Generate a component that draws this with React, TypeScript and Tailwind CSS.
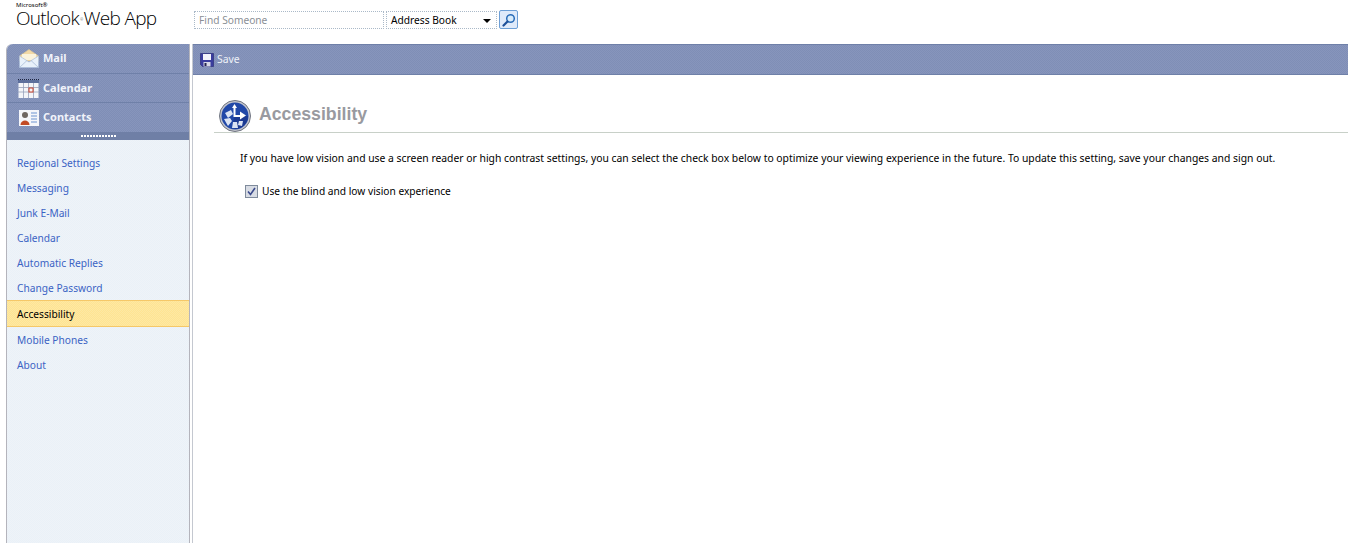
import React from "react";

const font = "font-['Noto_Sans','Liberation_Sans',sans-serif]";

// the reference is a dithered gif, so the panels get a faint checker
const barBg = "bg-[repeating-conic-gradient(#8795bc_0_25%,#7f8eb6_0_50%)] bg-[length:2px_2px]";
const sideBg = "bg-[repeating-conic-gradient(#e9f1f8_0_25%,#eff3f8_0_50%)] bg-[length:2px_2px]";
const activeBg = "bg-[repeating-conic-gradient(#ffe492_0_25%,#fde8a4_0_50%)] bg-[length:2px_2px]";

const optionLinks = ["Regional Settings", "Messaging", "Junk E-Mail", "Calendar", "Automatic Replies", "Change Password"];

function MailIcon() {
  return (
    <svg width="20" height="19" viewBox="0 0 20 19">
      <path d="M0.5 7 L10 0.5 L19.5 7 L19.5 12 L0.5 12 Z" fill="#f2d9a6" stroke="#d8c49a" strokeWidth="0.7" />
      <path d="M3 5 H17 V11 H3 Z" fill="#fbf3dc" />
      <path d="M0.5 7 L10 13 L19.5 7 L19.5 18.5 L0.5 18.5 Z" fill="#e8f1fb" stroke="#a9bcd8" strokeWidth="0.7" />
      <path d="M0.5 18.5 L8 11.5 M19.5 18.5 L12 11.5" stroke="#a9bcd8" strokeWidth="0.8" fill="none" />
    </svg>
  );
}

function CalendarIcon() {
  return (
    <svg width="21" height="19" viewBox="0 0 21 19">
      <rect x="0.5" y="1" width="20" height="18" fill="#f4f5f9" />
      <path d="M0 0.5 H21" stroke="#1b2340" strokeDasharray="1 1" />
      <rect x="0" y="1" width="21" height="3" fill="#5d6f9c" />
      <path d="M5.5 4 V19 M10.5 4 V19 M15.5 4 V19 M0 8.5 H21 M0 13 H21" stroke="#98a2bb" strokeWidth="0.8" />
      <rect x="11" y="9" width="4" height="4" fill="#f4f5f9" stroke="#c8402a" strokeWidth="1" />
    </svg>
  );
}

function ContactsIcon() {
  return (
    <svg width="20" height="16" viewBox="0 0 20 16">
      <rect x="0" y="0" width="20" height="16" fill="#f5f6fa" />
      <circle cx="6" cy="5" r="3" fill="#6e6660" />
      <path d="M1.5 15 C1.5 9 10.5 9 10.5 15 Z" fill="#c24a25" />
      <path d="M12 3 H18 M12 6 H18 M12 9 H18 M12 12 H18" stroke="#6f93cf" strokeWidth="1.2" />
    </svg>
  );
}

function SaveIcon() {
  return (
    <svg width="14" height="14" viewBox="0 0 14 14">
      <path d="M0.5 0.5 H13.5 V13.5 H2.5 L0.5 11.5 Z" fill="#3a3d9e" stroke="#25276f" strokeWidth="0.6" />
      <rect x="3" y="1" width="8" height="6" fill="#f2f3fb" />
      <rect x="3.5" y="9" width="7" height="4.5" fill="#d6d8e6" />
      <rect x="4.5" y="10" width="2" height="3" fill="#23244f" />
    </svg>
  );
}

function AccessIcon() {
  return (
    <svg width="32" height="32" viewBox="0 0 32 32">
      <circle cx="16" cy="16" r="15.5" fill="#c4c6ce" stroke="#6f7480" />
      <circle cx="16" cy="16" r="13.5" fill="#2148a8" />
      <path d="M16 16 A13 13 0 0 0 16 29 A13 13 0 0 0 29 16 Z" fill="#1c3a92" />
      <path d="M6 13 L12 10 L14 14 L9 18 Z M5 19 L11 18 L13 21 L9 26 Z M14 22 L18 22 L19 28 L13 28 Z M20 21 L24 21 L23 26 L19 25 Z" fill="#dbe3f3" />
      <path d="M15.5 7 V16 H22" stroke="#fff" strokeWidth="2" fill="none" />
      <path d="M21 11.5 L27 15.5 L21 19.5 Z" fill="#fff" />
      <path d="M13 8 L15.5 4 L18 8 Z" fill="#fff" />
    </svg>
  );
}

function SearchIcon() {
  return (
    <svg width="14" height="14" viewBox="0 0 14 14">
      <circle cx="8.5" cy="5.5" r="3.8" fill="#d9ecfb" stroke="#2a6cb8" strokeWidth="1.5" />
      <path d="M5.5 8.5 L1.5 12.5" stroke="#1d4f99" strokeWidth="2.2" strokeLinecap="round" />
    </svg>
  );
}

function NavRow({ icon, label, className }: { icon: React.ReactNode; label: string; className: string }) {
  return (
    <div className={`flex items-center border-b border-[#6f80a8] ${className}`}>
      <div className="flex w-[36px] shrink-0 justify-end pr-[4px]">{icon}</div>
      <span className="text-[11px] font-bold text-[#f0f3fa]">{label}</span>
    </div>
  );
}

export default function App() {
  return (
    <div className={`flex h-[543px] w-[1348px] flex-col overflow-hidden bg-white ${font}`}>
      <header className="flex h-[44px] shrink-0 items-start">
        <div className="ml-[16px] w-[178px] shrink-0 text-black">
          <div className="mt-[2px] h-[6px] text-[6px] leading-[6px]">Microsoft®</div>
          <div className="mt-[1px] h-[18px] whitespace-nowrap font-['Open_Sans',sans-serif] text-[19px] font-light leading-[18px] tracking-[-0.7px]">
            Outlook<span className="mx-[1px] text-[4px] align-middle">®</span>Web App
          </div>
        </div>
        <div className="mt-[10px] flex items-center">
          <div className="flex h-[18px] w-[190px] items-center border border-dotted border-[#aab9c8] pl-[4px] pt-[2px] text-[10.2px] text-[#8a8f96]">
            Find Someone
          </div>
          <div className="ml-[2px] flex h-[18px] w-[111px] items-center justify-between border border-dotted border-[#aab9c8] pl-[4px] pr-[4px] pt-[2px] text-[10.2px] text-black">
            Address Book
            <span className="mr-[1px] h-0 w-0 border-x-[4px] border-t-[4px] border-x-transparent border-t-black" />
          </div>
          <div className="ml-[2px] flex h-[19px] w-[19px] items-center justify-center rounded-[2px] border border-[#6d9fd6] bg-[#dfeafa]">
            <SearchIcon />
          </div>
        </div>
      </header>

      <div className="flex min-h-0 flex-1">
        <aside className={`ml-[6px] flex w-[184px] shrink-0 flex-col rounded-tl-[6px] border-x border-[#b4b4bc] ${sideBg}`}>
          <div className={`rounded-tl-[6px] ${barBg}`}>
            <NavRow icon={<MailIcon />} label="Mail" className="h-[30px]" />
            <NavRow icon={<CalendarIcon />} label="Calendar" className="h-[29px]" />
            <NavRow icon={<ContactsIcon />} label="Contacts" className="h-[29px] border-b-0" />
            <div className="flex h-[8px] items-center justify-center bg-[#6f7fa6]">
              <div className="h-[2px] w-[35px] bg-[repeating-linear-gradient(90deg,#ffffff_0,#ffffff_2px,transparent_2px,transparent_3px)]" />
            </div>
          </div>
          <nav className="flex flex-col pt-[10px] text-[10.2px] text-[#3b63c4]">
            {optionLinks.map((label) => (
              <div key={label} className="flex h-[25px] items-center pl-[10px] pt-[2px]">
                {label}
              </div>
            ))}
            <div className={`flex h-[27px] items-center border-y border-[#f5c868] pl-[10px] pt-[2px] text-black ${activeBg}`}>
              Accessibility
            </div>
            <div className="flex h-[25px] items-center pl-[10px] pt-[2px]">Mobile Phones</div>
            <div className="flex h-[25px] items-center pl-[10px] pt-[2px]">About</div>
          </nav>
        </aside>

        <main className="ml-[2px] flex min-w-0 flex-1 flex-col border-l border-[#c4c8d0]">
          <div className={`flex h-[31px] shrink-0 items-center gap-[3px] border-y border-[#6f80a8] pl-[7px] text-[10.4px] text-[#eef1f8] ${barBg}`}>
            <SaveIcon />
            Save
          </div>
          <div className="mt-[24px] ml-[21px] flex h-[34px] items-center gap-[8px] border-b border-[#c8d0c8]">
            <div className="ml-[5px]">
              <AccessIcon />
            </div>
            <h1 className="pb-[2px] font-['Liberation_Sans',sans-serif] text-[17.7px] font-bold text-[#999aa0]">Accessibility</h1>
          </div>
          <p className="mt-[18px] ml-[47px] whitespace-nowrap text-[10.37px] leading-[15px] text-black">
            If you have low vision and use a screen reader or high contrast settings, you can select the check box below to optimize your viewing experience in the future. To update this setting, save your changes and sign out.
          </p>
          <label className="mt-[18px] ml-[52px] flex items-center gap-[4px] text-[10.2px] leading-[15px] text-black">
            <span className="flex h-[13px] w-[13px] items-center justify-center border border-[#7f8b9c] bg-[#d8dce4]">
              <svg width="9" height="9" viewBox="0 0 9 9">
                <path d="M1 4.5 L3.5 7.5 L8 1" stroke="#3a4a8c" strokeWidth="1.6" fill="none" />
              </svg>
            </span>
            Use the blind and low vision experience
          </label>
        </main>
      </div>
    </div>
  );
}
